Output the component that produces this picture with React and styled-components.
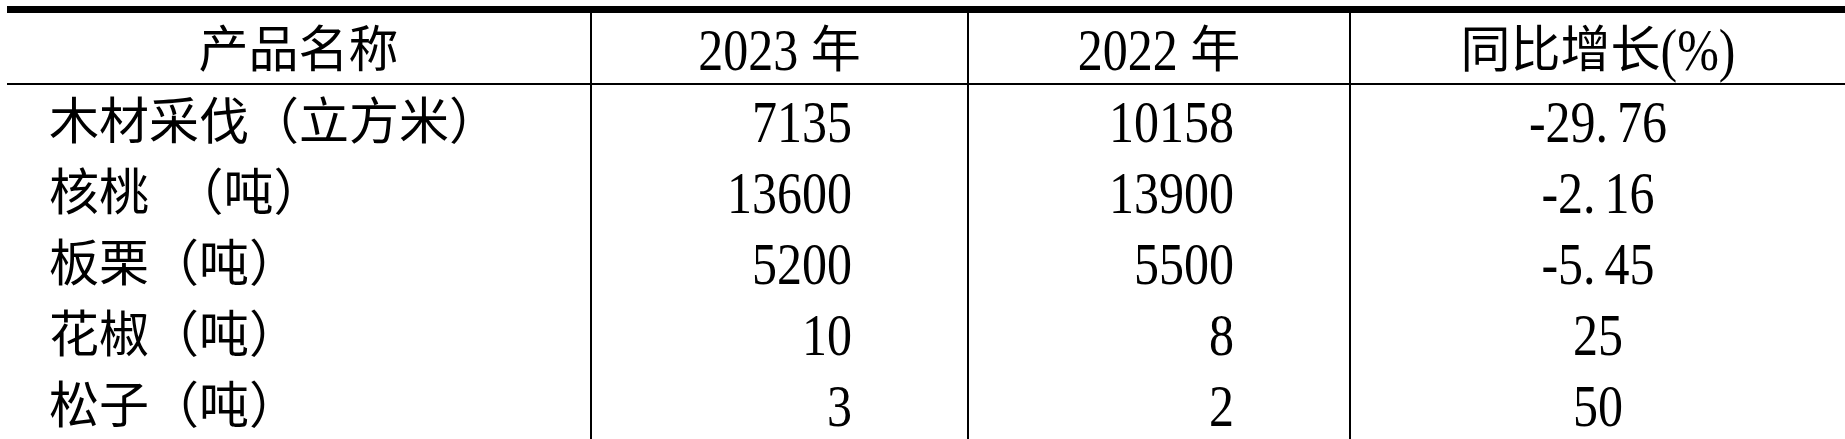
import styled, { createGlobalStyle } from "styled-components";

const GlobalStyle = createGlobalStyle`
  html, body {
    margin: 0;
    padding: 0;
    background: #fff;
    overflow: hidden;
  }
`;

const Page = styled.div`
  padding: 6px 0 0 7px;
  font-family: "Liberation Serif", "Noto Sans CJK SC", serif;
  color: #000;
`;

const Table = styled.table`
  width: 1838px;
  table-layout: fixed;
  border-collapse: separate;
  border-spacing: 0;
  border-top: 7px solid #000;
  font-size: 50px;
  line-height: 1;
`;

const Head = styled.th`
  box-sizing: border-box;
  height: 72px;
  padding: 4px 0 0;
  font-weight: 400;
  text-align: center;
  vertical-align: middle;
  border-bottom: 2px solid #000;
  border-left: ${(props) => (props.first ? "none" : "2px solid #000")};
  white-space: nowrap;
`;

const Cell = styled.td`
  box-sizing: border-box;
  height: 71px;
  padding: ${(props) =>
    props.align === "left"
      ? "3px 0 0 42px"
      : props.align === "right"
      ? "3px 115px 0 0"
      : "3px 0 0"};
  text-align: ${(props) => props.align};
  vertical-align: middle;
  border-left: ${(props) => (props.first ? "none" : "2px solid #000")};
  white-space: nowrap;
  word-spacing: ${(props) => (props.first ? "12px" : "0")};
`;

// digits in the source are taller and narrower than Times
const Num = styled.span`
  display: inline-block;
  transform: scaleY(1.18);
`;

const Point = styled.span`
  margin-right: 9px;
`;

const Value = ({ text }) => {
  const [whole, frac] = text.split(".");
  return (
    <Num>
      {whole}
      {frac !== undefined && (
        <>
          <Point>.</Point>
          {frac}
        </>
      )}
    </Num>
  );
};

const rows = [
  { name: "木材采伐（立方米）", y2023: "7135", y2022: "10158", rate: "-29.76" },
  { name: "核桃 （吨）", y2023: "13600", y2022: "13900", rate: "-2.16" },
  { name: "板栗（吨）", y2023: "5200", y2022: "5500", rate: "-5.45" },
  { name: "花椒（吨）", y2023: "10", y2022: "8", rate: "25" },
  { name: "松子（吨）", y2023: "3", y2022: "2", rate: "50" },
];

const App = () => {
  return (
    <Page>
      <GlobalStyle />
      <Table>
        <colgroup>
          <col style={{ width: 583 }} />
          <col style={{ width: 377 }} />
          <col style={{ width: 382 }} />
          <col style={{ width: 496 }} />
        </colgroup>
        <thead>
          <tr>
            <Head first>产品名称</Head>
            <Head>
              <Num>2023</Num> 年
            </Head>
            <Head>
              <Num>2022</Num> 年
            </Head>
            <Head>
              同比增长<Num>(%)</Num>
            </Head>
          </tr>
        </thead>
        <tbody>
          {rows.map((row) => (
            <tr key={row.name}>
              <Cell first align="left">
                {row.name}
              </Cell>
              <Cell align="right">
                <Value text={row.y2023} />
              </Cell>
              <Cell align="right">
                <Value text={row.y2022} />
              </Cell>
              <Cell align="center">
                <Value text={row.rate} />
              </Cell>
            </tr>
          ))}
        </tbody>
      </Table>
    </Page>
  );
};

export default App;
